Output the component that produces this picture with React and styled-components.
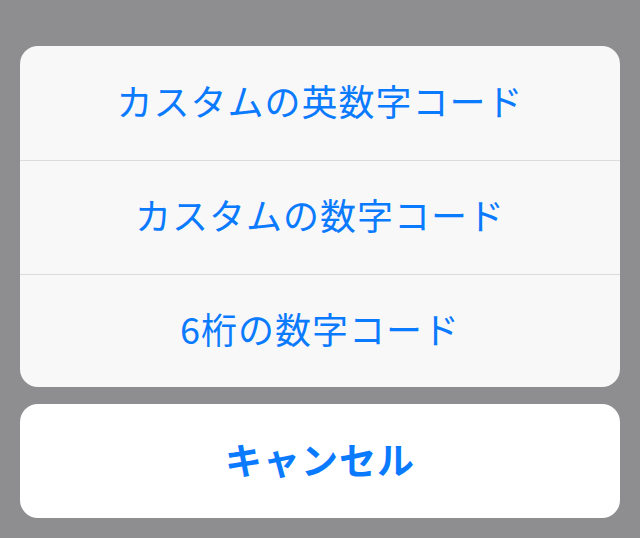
import styled, { createGlobalStyle } from 'styled-components';

const Global = createGlobalStyle`
  html, body {
    margin: 0;
    padding: 0;
    background: #8e8e90;
  }
  body {
    font-family: "Noto Sans CJK JP", "Noto Sans", sans-serif;
  }
`

const Screen = styled.div`
  width: 640px;
  height: 538px;
  box-sizing: border-box;
  padding: 46px 20px 20px;
  display: flex;
  flex-direction: column;
  gap: 17px;
  background: #8e8e90;
`

const Sheet = styled.div`
  display: flex;
  flex-direction: column;
  background: #f8f8f8;
  border-radius: 18px;
  overflow: hidden;
`

const Option = styled.div`
  height: 114px;
  box-sizing: border-box;
  padding-bottom: 6px;
  display: flex;
  align-items: center;
  justify-content: center;
  font-size: 36px;
  font-weight: 400;
  color: #0a7aff;
  letter-spacing: 1px;
  border-top: ${p => p.first ? 'none' : '1px solid #dcdcde'};
  cursor: pointer;
`

const Cancel = styled.div`
  height: 114px;
  box-sizing: border-box;
  padding-bottom: 4px;
  display: flex;
  align-items: center;
  justify-content: center;
  background: #ffffff;
  border-radius: 18px;
  font-size: 37px;
  font-weight: 700;
  color: #0a7aff;
  letter-spacing: 1px;
  cursor: pointer;
`

const options = ['カスタムの英数字コード', 'カスタムの数字コード', '6桁の数字コード'];

export default function App() {
    return (
        <>
            <Global />
            <Screen>
                <Sheet>
                    {options.map((o, i) => (
                        <Option key={o} first={i === 0}>{o}</Option>
                    ))}
                </Sheet>
                <Cancel>キャンセル</Cancel>
            </Screen>
        </>
    )
}
